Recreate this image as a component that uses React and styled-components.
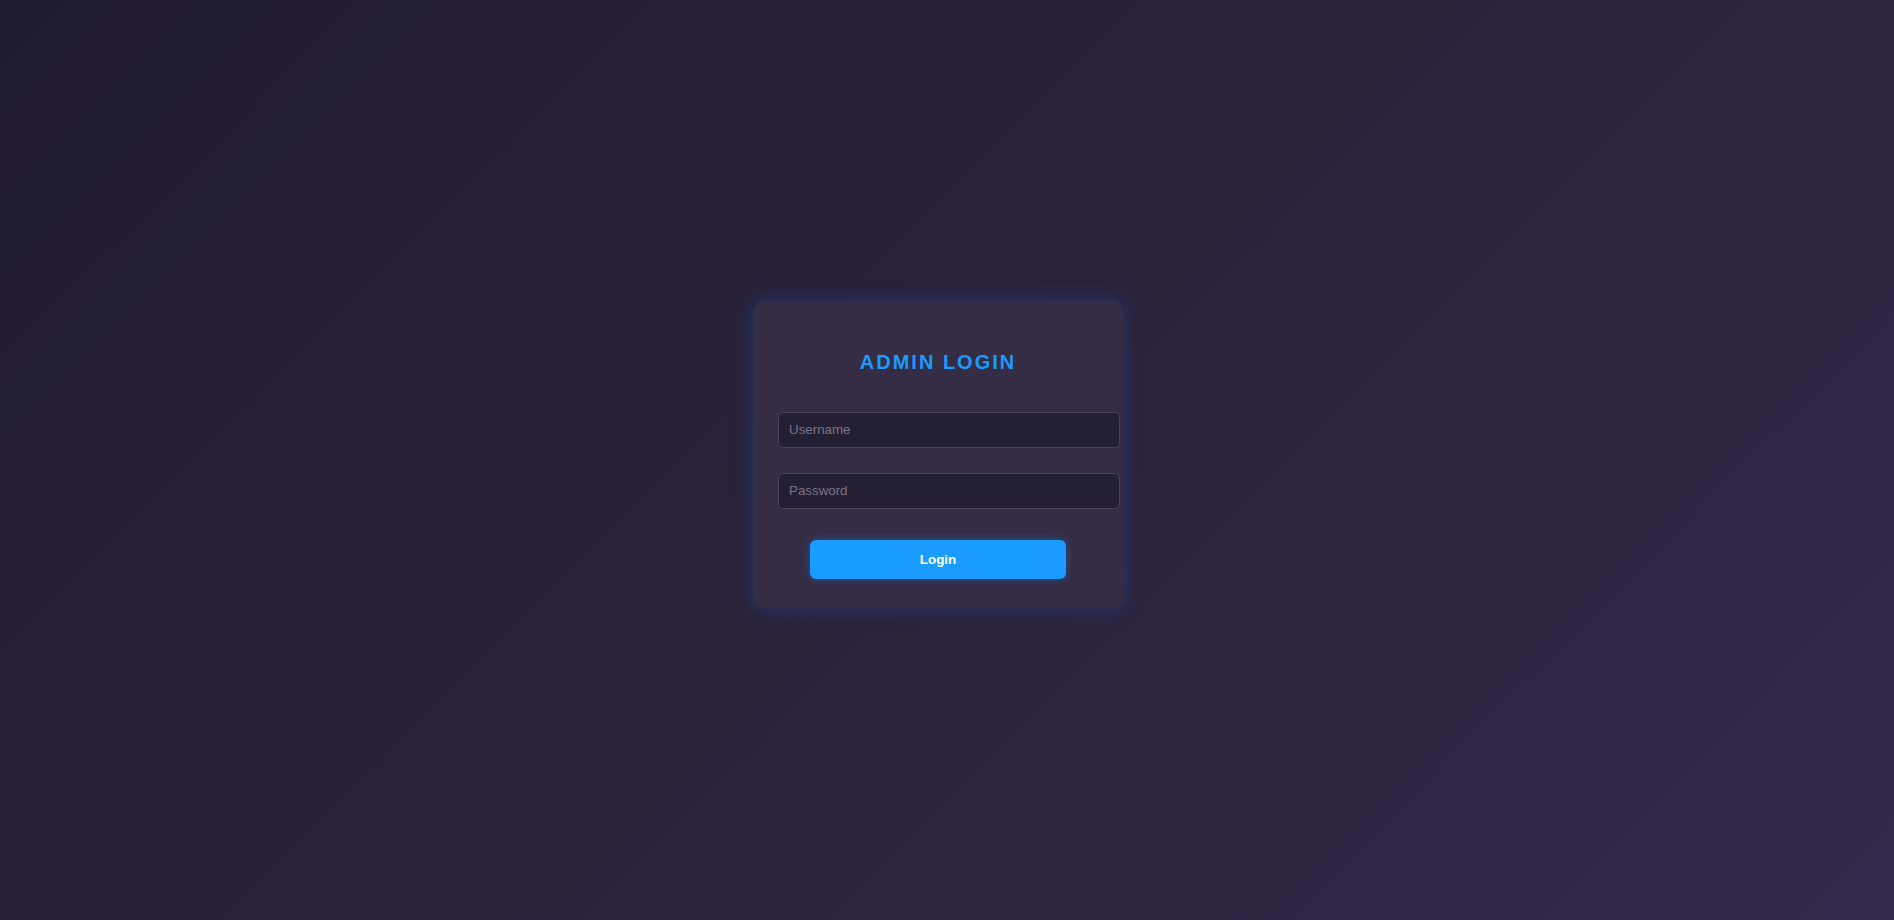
import React from 'react'
import styled, { createGlobalStyle } from 'styled-components'

const GlobalStyle = createGlobalStyle`
  html, body {
    margin: 0;
    padding: 0;
  }
  body {
    font-family: "Liberation Sans", Arial, sans-serif;
    background: linear-gradient(135deg, #211b31 0%, #2a2239 50%, #342a4b 100%);
    min-height: 100vh;
  }
`

const Page = styled.main`
  min-height: 100vh;
  display: flex;
  align-items: center;
  justify-content: center;
  padding: 0 18px 12px 0;
  box-sizing: border-box;
`

const Card = styled.div`
  width: 320px;
  padding: 25px 25px 29px;
  background: #352c46;
  border-radius: 10px;
  box-shadow: 0 0 20px rgba(30, 110, 235, 0.3);
`

const Title = styled.h2`
  margin: 25px 0 38px;
  text-align: center;
  color: #1a9bff;
  font-size: 20px;
  font-weight: bold;
  letter-spacing: 2px;
  line-height: 23px;
`

const Form = styled.form`
  display: flex;
  flex-direction: column;
`

const Input = styled.input`
  width: 100%;
  height: 14px;
  padding: 10px;
  margin-bottom: ${(p) => p.$last ? '31px' : '25px'};
  font-family: "Liberation Sans", Arial, sans-serif;
  font-size: 13.33px;
  color: #ddd;
  background: #251f35;
  border: 1px solid #4a4357;
  border-radius: 5px;
  outline: none;
  &::placeholder {
    color: #7b7586;
  }
`

const Button = styled.button`
  align-self: center;
  width: 80%;
  padding: 12px;
  font-family: "Liberation Sans", Arial, sans-serif;
  font-size: 13.33px;
  font-weight: bold;
  line-height: 15px;
  color: #fff;
  background: #1a9bff;
  border: none;
  border-radius: 6px;
  box-shadow: 0 0 10px rgba(26, 155, 255, 0.35);
  cursor: pointer;
`

const App = () => {
  return <>
    <GlobalStyle />
    <Page>
      <Card>
        <Title>ADMIN LOGIN</Title>
        <Form onSubmit={(e) => e.preventDefault()}>
          <Input type="text" placeholder="Username" />
          <Input type="password" placeholder="Password" $last />
          <Button type="submit">Login</Button>
        </Form>
      </Card>
    </Page>
  </>
}

export default App
